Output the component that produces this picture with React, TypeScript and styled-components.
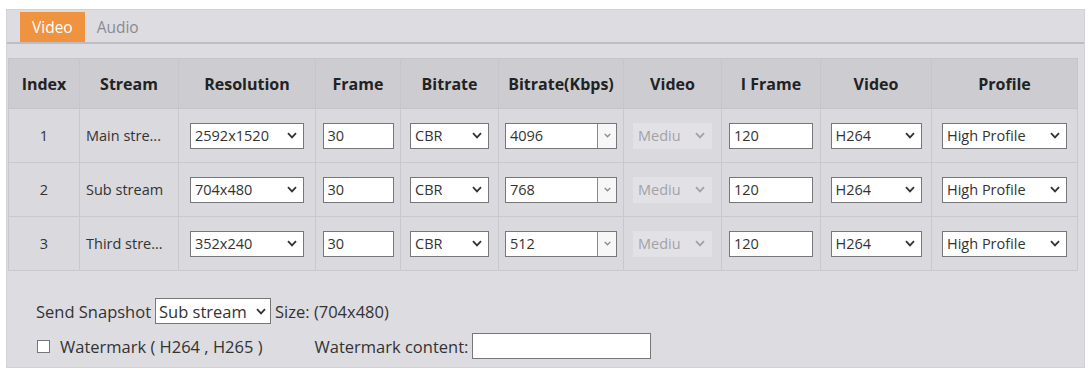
import * as React from 'react';
import styled, { createGlobalStyle } from 'styled-components';

const GlobalStyle = createGlobalStyle`
  html, body {
    margin: 0;
    padding: 0;
    background: #ffffff;
  }
  body {
    font-family: "Open Sans", "Liberation Sans", sans-serif;
    color: #333333;
  }
`;

const Panel = styled.div`
  margin: 9px 0 0 6px;
  width: 1079px;
  height: 359px;
  box-sizing: border-box;
  border: 1px solid #d2d1d6;
  background: #dddce1;
`;

const TabBar = styled.div`
  display: flex;
  align-items: flex-end;
  height: 34px;
  box-sizing: border-box;
  padding: 0 0 0 13px;
  border-bottom: 2px solid #bebdc2;
`;

const Tab = styled.div<{ $active?: boolean }>`
  height: 30px;
  padding: 0 12px;
  display: flex;
  align-items: center;
  font-size: 15.5px;
  color: ${(p) => (p.$active ? '#ffffff' : '#8b8a91')};
  background: ${(p) => (p.$active ? '#ef9340' : 'transparent')};
`;

const Table = styled.table`
  margin: 14px 0 0 1px;
  width: 1069px;
  table-layout: fixed;
  border-collapse: collapse;
  border-spacing: 0;
`;

const TH = styled.th`
  height: 49px;
  padding: 0;
  background: #cdccd1;
  border: 1px solid #c6c5ca;
  font-size: 16px;
  font-weight: 700;
  color: #222222;
  text-align: center;
`;

const TR = styled.tr`
  background: #dad9de;
`;

const TD = styled.td<{ $left?: boolean }>`
  height: 53px;
  padding: 0 0 0 ${(p) => (p.$left ? '6px' : '0')};
  border: 1px solid #c9c8cd;
  font-size: 14.5px;
  color: #333333;
  text-align: ${(p) => (p.$left ? 'left' : 'center')};
  white-space: nowrap;
  overflow: hidden;
`;

const Select = styled.div<{ $w: number; $disabled?: boolean }>`
  display: inline-flex;
  align-items: center;
  justify-content: space-between;
  width: ${(p) => p.$w}px;
  height: 26px;
  box-sizing: border-box;
  padding: 0 6px 0 4px;
  border: 1px solid ${(p) => (p.$disabled ? '#e2e1e5' : '#77767b')};
  background: ${(p) => (p.$disabled ? '#e2e1e5' : '#ffffff')};
  color: ${(p) => (p.$disabled ? '#a3a2a7' : '#333333')};
  font-size: 14.5px;
  vertical-align: middle;
  text-align: left;
  overflow: hidden;
`;

const SelectText = styled.span`
  overflow: hidden;
  white-space: nowrap;
`;

const Input = styled.div<{ $w: number }>`
  display: inline-flex;
  align-items: center;
  width: ${(p) => p.$w}px;
  height: 26px;
  box-sizing: border-box;
  padding: 0 4px;
  border: 1px solid #77767b;
  background: #ffffff;
  font-size: 14.5px;
  color: #333333;
  vertical-align: middle;
  text-align: left;
`;

const Combo = styled.div`
  display: inline-flex;
  width: 112px;
  height: 26px;
  box-sizing: border-box;
  border: 1px solid #77767b;
  background: #ffffff;
  vertical-align: middle;
  text-align: left;
`;

const ComboText = styled.div`
  flex: 1;
  display: flex;
  align-items: center;
  padding: 0 4px;
  font-size: 14.5px;
  color: #333333;
`;

const ComboButton = styled.div`
  width: 18px;
  display: flex;
  align-items: center;
  justify-content: center;
  border-left: 1px solid #8a898e;
  background: #f7f7f8;
`;

const Footer = styled.div`
  display: flex;
  flex-direction: column;
  gap: 9px;
  padding: 27px 0 0 29px;
`;

const FooterRow = styled.div`
  display: flex;
  align-items: center;
  height: 26px;
  font-size: 16.5px;
  color: #333333;
`;

const Label = styled.span<{ $ml?: number }>`
  margin-left: ${(p) => p.$ml ?? 0}px;
  white-space: nowrap;
`;

const FooterSelect = styled(Select)`
  margin: 0 4px;
  font-size: 16.5px;
  padding: 0 4px 0 3px;
`;

const Checkbox = styled.span`
  width: 13px;
  height: 13px;
  box-sizing: border-box;
  border: 1px solid #77767b;
  background: #ffffff;
  margin: 0 10px 0 1px;
`;

const TextField = styled.div`
  width: 179px;
  height: 26px;
  box-sizing: border-box;
  margin-left: 4px;
  border: 1px solid #77767b;
  background: #ffffff;
`;

const Chevron = ({ color = '#333333', small = false }: { color?: string; small?: boolean }) => (
  <svg width={small ? 7 : 10} height={small ? 5 : 7} viewBox="0 0 10 7" style={{ flex: 'none' }}>
    <polyline points="1,1.2 5,5.4 9,1.2" fill="none" stroke={color} strokeWidth={small ? 2 : 1.8} />
  </svg>
);

const columns = [71, 99, 137, 85, 98, 125, 98, 99, 111, 146];
const headers = ['Index', 'Stream', 'Resolution', 'Frame', 'Bitrate', 'Bitrate(Kbps)', 'Video', 'I Frame', 'Video', 'Profile'];

const streams = [
  { index: 1, name: 'Main stre...', resolution: '2592x1520', kbps: '4096' },
  { index: 2, name: 'Sub stream', resolution: '704x480', kbps: '768' },
  { index: 3, name: 'Third stre...', resolution: '352x240', kbps: '512' },
];

const App = () => (
  <>
    <GlobalStyle />
    <Panel>
      <TabBar>
        <Tab $active>Video</Tab>
        <Tab>Audio</Tab>
      </TabBar>
      <Table>
        <colgroup>
          {columns.map((w, i) => (
            <col key={i} style={{ width: w }} />
          ))}
        </colgroup>
        <thead>
          <tr>
            {headers.map((h, i) => (
              <TH key={i}>{h}</TH>
            ))}
          </tr>
        </thead>
        <tbody>
          {streams.map((s) => (
            <TR key={s.index}>
              <TD>{s.index}</TD>
              <TD $left>{s.name}</TD>
              <TD>
                <Select $w={114}>
                  <SelectText>{s.resolution}</SelectText>
                  <Chevron />
                </Select>
              </TD>
              <TD>
                <Input $w={71}>30</Input>
              </TD>
              <TD>
                <Select $w={79}>
                  <SelectText>CBR</SelectText>
                  <Chevron />
                </Select>
              </TD>
              <TD>
                <Combo>
                  <ComboText>{s.kbps}</ComboText>
                  <ComboButton>
                    <Chevron color="#8a898e" small />
                  </ComboButton>
                </Combo>
              </TD>
              <TD>
                <Select $w={79} $disabled>
                  <SelectText>Mediu</SelectText>
                  <Chevron color="#a3a2a7" />
                </Select>
              </TD>
              <TD>
                <Input $w={84}>120</Input>
              </TD>
              <TD>
                <Select $w={91}>
                  <SelectText>H264</SelectText>
                  <Chevron />
                </Select>
              </TD>
              <TD>
                <Select $w={125}>
                  <SelectText>High Profile</SelectText>
                  <Chevron />
                </Select>
              </TD>
            </TR>
          ))}
        </tbody>
      </Table>
      <Footer>
        <FooterRow>
          <Label>Send Snapshot</Label>
          <FooterSelect $w={116}>
            <SelectText>Sub stream</SelectText>
            <Chevron />
          </FooterSelect>
          <Label>Size: (704x480)</Label>
        </FooterRow>
        <FooterRow>
          <Checkbox />
          <Label>Watermark ( H264 , H265 )</Label>
          <Label $ml={52}>Watermark content:</Label>
          <TextField />
        </FooterRow>
      </Footer>
    </Panel>
  </>
);

export default App;
